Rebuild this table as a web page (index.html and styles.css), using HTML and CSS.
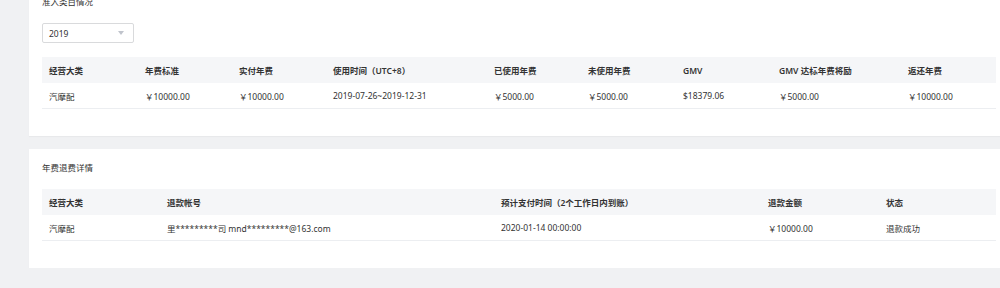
FILE: index.html
```html
<!DOCTYPE html>
<html lang="zh-CN">
<head>
<meta charset="utf-8">
<title>年费情况</title>
<link rel="stylesheet" href="styles.css">
</head>
<body>
<div class="page">
  <section class="card">
    <div class="card-title">准入类目情况</div>
    <div class="select">
      <span class="select-value">2019</span>
      <svg class="select-arrow" width="6" height="4" viewBox="0 0 6 4"><path d="M0 0 L6 0 L3 4 Z" fill="#c0c4cc"/></svg>
    </div>
    <table class="grid">
      <colgroup>
        <col style="width:96px"><col style="width:94px"><col style="width:94px"><col style="width:161px"><col style="width:94px"><col style="width:95px"><col style="width:96px"><col style="width:129px"><col style="width:95px">
      </colgroup>
      <thead>
        <tr><th>经营大类</th><th>年费标准</th><th>实付年费</th><th>使用时间（UTC+8）</th><th>已使用年费</th><th>未使用年费</th><th>GMV</th><th>GMV 达标年费将励</th><th>返还年费</th></tr>
      </thead>
      <tbody>
        <tr><td>汽摩配</td><td>￥10000.00</td><td>￥10000.00</td><td>2019-07-26~2019-12-31</td><td>￥5000.00</td><td>￥5000.00</td><td>$18379.06</td><td>￥5000.00</td><td>￥10000.00</td></tr>
      </tbody>
    </table>
  </section>
  <section class="card">
    <div class="card-title">年费退费详情</div>
    <table class="grid">
      <colgroup>
        <col style="width:118px"><col style="width:334px"><col style="width:267px"><col style="width:118px"><col style="width:117px">
      </colgroup>
      <thead>
        <tr><th>经营大类</th><th>退款帐号</th><th>预计支付时间（2个工作日内到账）</th><th>退款金额</th><th>状态</th></tr>
      </thead>
      <tbody>
        <tr><td>汽摩配</td><td>里*********司 mnd*********@163.com</td><td>2020-01-14 00:00:00</td><td>￥10000.00</td><td>退款成功</td></tr>
      </tbody>
    </table>
  </section>
</div>
</body>
</html>
```

FILE: styles.css
```css
html, body {
  margin: 0;
  padding: 0;
  background: #f0f1f3;
  overflow: hidden;
}
body {
  font-family: "Noto Sans", "Noto Sans CJK SC", sans-serif;
  font-size: 8.5px;
  color: #333;
}
.page {
  display: flex;
  flex-direction: column;
  gap: 13px;
  margin-top: -17px;
  padding-left: 29px;
  width: 1100px;
}
.card {
  background: #fff;
  width: 954px;
  padding: 13px 13px 27px 13px;
  display: flex;
  flex-direction: column;
  gap: 15px;
  box-shadow: 0 1px 1px rgba(0,0,0,0.03);
}
.card-title {
  line-height: 12px;
  height: 12px;
  color: #333;
}
.select {
  width: 92px;
  height: 20px;
  box-sizing: border-box;
  border: 1px solid #d9dadc;
  border-radius: 2px;
  display: flex;
  align-items: center;
  justify-content: space-between;
  padding: 0 9px 0 6px;
  margin-bottom: -1px;
}
.select-value {
  color: #333;
}
.grid {
  width: 954px;
  table-layout: fixed;
  border-collapse: collapse;
}
.grid th, .grid td {
  text-align: left;
  padding: 0 0 0 7px;
  white-space: nowrap;
  overflow: hidden;
}
.grid th {
  background: #f5f6f8;
  height: 26px;
  font-weight: 600;
  color: #333;
}
.grid td {
  height: 25px;
  border-bottom: 1px solid #eceef1;
  color: #333;
}
```
